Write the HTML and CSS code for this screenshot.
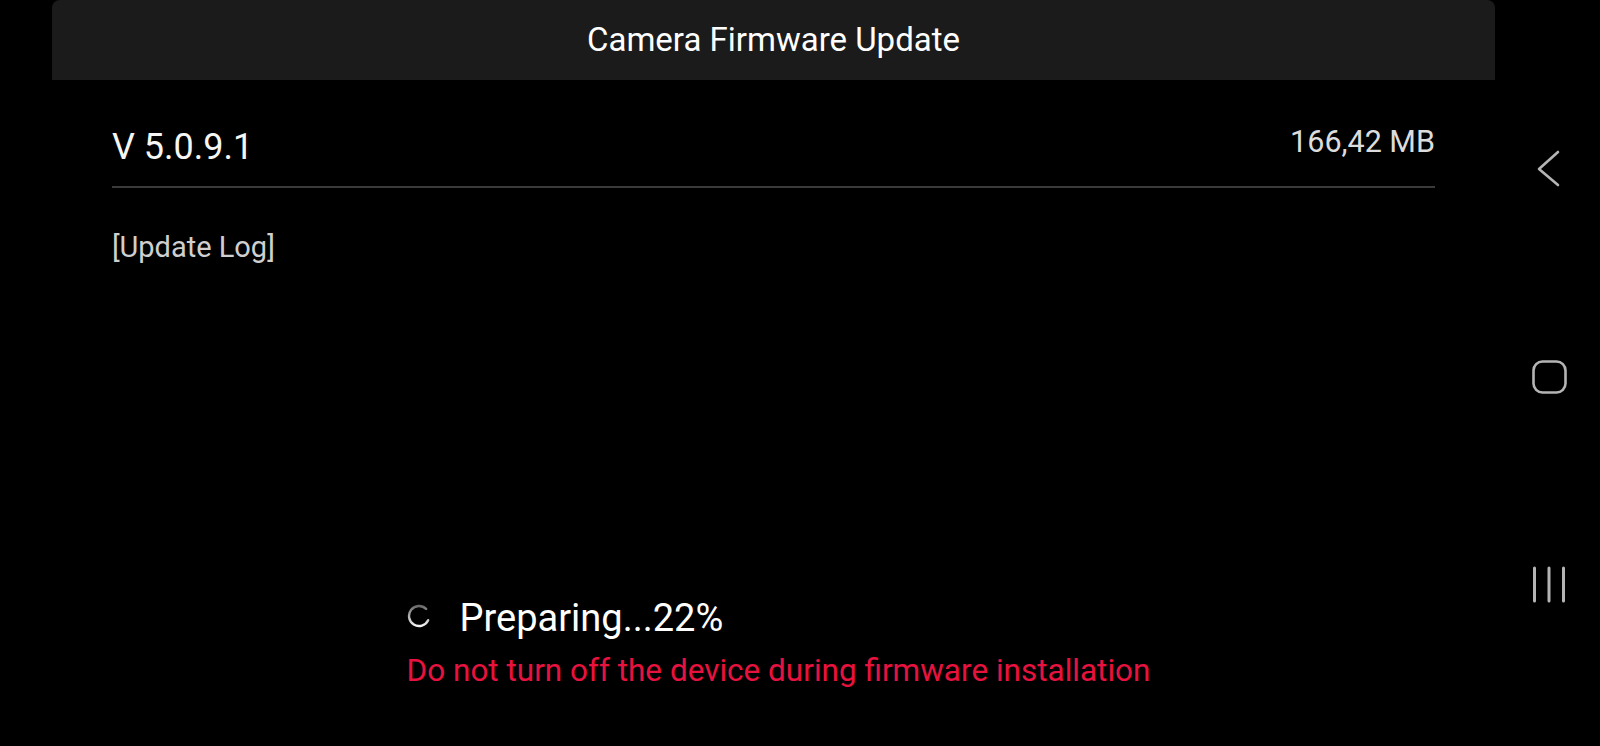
FILE: index.html
```html
<!DOCTYPE html>
<html lang="en">
<head>
    <meta charset="UTF-8">
    <meta name="viewport" content="width=device-width, initial-scale=1.0">
    <title>Camera Firmware Update</title>
    <link rel="stylesheet" href="styles.css">
</head>
<body>
    <div class="screen">
        <!-- 앱 영역 -->
        <main class="app">
            <header class="title-bar">
                <h1>Camera Firmware Update</h1>
            </header>

            <section class="info">
                <div class="version-row">
                    <span class="version">V 5.0.9.1</span>
                    <span class="size">166,42 MB</span>
                </div>
                <p class="log">[Update Log]</p>
            </section>

            <!-- 진행 상태 -->
            <div class="progress">
                <div class="progress-inner">
                    <div class="status">
                        <svg class="spinner" width="24" height="24" viewBox="0 0 24 24">
                            <defs>
                                <linearGradient id="spin-grad" x1="0" y1="0" x2="0" y2="1">
                                    <stop offset="0" stop-color="#6a6a6a"/>
                                    <stop offset="1" stop-color="#f4f4f4"/>
                                </linearGradient>
                            </defs>
                            <path d="M19.1 4.9 A10 10 0 1 0 21.1 16.2" fill="none" stroke="url(#spin-grad)" stroke-width="2.4" stroke-linecap="round"/>
                        </svg>
                        <span>Preparing...22%</span>
                    </div>
                    <p class="warning">Do not turn off the device during firmware installation</p>
                </div>
            </div>
        </main>

        <!-- 내비게이션 바 -->
        <nav class="nav-bar">
            <svg class="nav-icon" width="40" height="40" viewBox="0 0 40 40">
                <polyline points="28,4 9,21 28,37" fill="none" stroke="#b4b4b4" stroke-width="2.6" stroke-linecap="round" stroke-linejoin="round"/>
            </svg>
            <svg class="nav-icon" width="40" height="40" viewBox="0 0 40 40">
                <rect x="3.5" y="5.5" width="32" height="31" rx="9" fill="none" stroke="#b4b4b4" stroke-width="2.6"/>
            </svg>
            <svg class="nav-icon" width="40" height="40" viewBox="0 0 40 40">
                <line x1="4.5" y1="4" x2="4.5" y2="37" stroke="#b4b4b4" stroke-width="3" stroke-linecap="round"/>
                <line x1="19" y1="4" x2="19" y2="37" stroke="#b4b4b4" stroke-width="3" stroke-linecap="round"/>
                <line x1="33.5" y1="4" x2="33.5" y2="37" stroke="#b4b4b4" stroke-width="3" stroke-linecap="round"/>
            </svg>
        </nav>
    </div>
</body>
</html>
```

FILE: styles.css
```css
html, body {
    margin: 0;
    background: #000;
}
body {
    font-family: Roboto, "Noto Sans", sans-serif;
    color: #fff;
}
.screen {
    display: flex;
    height: 746px;
    overflow: hidden;
}
.app {
    flex: 1;
    display: flex;
    flex-direction: column;
    padding: 0 5px 0 52px;
}
.title-bar {
    height: 80px;
    background-color: #1b1b1b;
    border-radius: 8px 8px 0 0;
    display: flex;
    align-items: center;
    justify-content: center;
}
.title-bar h1 {
    margin: 0;
    font-size: 33px;
    font-weight: 400;
    line-height: 40px;
}
.info {
    padding: 0 60px;
}
.version-row {
    display: flex;
    justify-content: space-between;
    align-items: flex-start;
    padding: 45px 0 17px;
    border-bottom: 2px solid #3a3a3a;
}
.version {
    font-size: 36px;
    line-height: 44px;
    color: #f6f6f6;
}
.size {
    font-size: 30.5px;
    line-height: 34px;
    color: #dcdcdc;
}
.log {
    margin: 43px 0 0;
    font-size: 29px;
    line-height: 32px;
    color: #cfcfcf;
}
.progress {
    flex: 1;
    display: flex;
    justify-content: center;
    align-items: flex-end;
    padding: 0 0 56px 10px;
}
.status {
    display: flex;
    align-items: center;
    font-size: 38px;
    line-height: 44px;
}
.spinner {
    margin: -4px 29px 0 0;
}
.warning {
    margin: 12px 0 0;
    font-size: 31.5px;
    line-height: 38px;
    color: #e8123f;
}
.nav-bar {
    width: 100px;
    display: flex;
    flex-direction: column;
    align-items: center;
    gap: 168px;
    padding-top: 148px;
}
```
